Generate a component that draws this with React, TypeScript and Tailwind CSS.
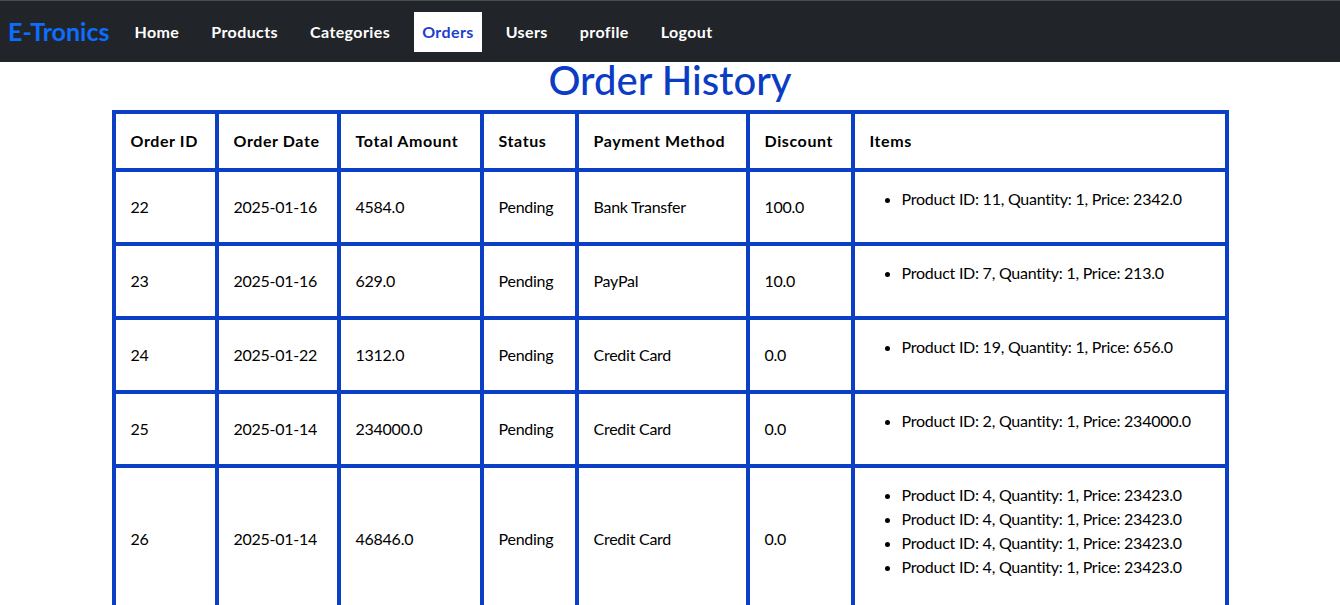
const orders = [
  { id: 22, date: "2025-01-16", total: "4584.0", status: "Pending", method: "Bank Transfer", discount: "100.0", items: ["Product ID: 11, Quantity: 1, Price: 2342.0"] },
  { id: 23, date: "2025-01-16", total: "629.0", status: "Pending", method: "PayPal", discount: "10.0", items: ["Product ID: 7, Quantity: 1, Price: 213.0"] },
  { id: 24, date: "2025-01-22", total: "1312.0", status: "Pending", method: "Credit Card", discount: "0.0", items: ["Product ID: 19, Quantity: 1, Price: 656.0"] },
  { id: 25, date: "2025-01-14", total: "234000.0", status: "Pending", method: "Credit Card", discount: "0.0", items: ["Product ID: 2, Quantity: 1, Price: 234000.0"] },
  {
    id: 26,
    date: "2025-01-14",
    total: "46846.0",
    status: "Pending",
    method: "Credit Card",
    discount: "0.0",
    items: [
      "Product ID: 4, Quantity: 1, Price: 23423.0",
      "Product ID: 4, Quantity: 1, Price: 23423.0",
      "Product ID: 4, Quantity: 1, Price: 23423.0",
      "Product ID: 4, Quantity: 1, Price: 23423.0",
    ],
  },
];

const links = ["Home", "Products", "Categories", "Orders", "Users", "profile", "Logout"];

// column widths measured between border lines
const cols = ["w-[103px]", "w-[122px]", "w-[143px]", "w-[95px]", "w-[171px]", "w-[105px]", "w-[374px]"];
const headers = ["Order ID", "Order Date", "Total Amount", "Status", "Payment Method", "Discount", "Items"];

const cell = "border-4 border-[#0b3fc5] px-[15px] py-[15px] align-middle";

export default function App() {
  return (
    <div className="min-h-screen bg-white text-black font-['Lato','Liberation_Sans',sans-serif] text-base leading-6">
      <nav className="h-[62px] bg-[#212529] border-t border-[#4a4d52] flex items-center px-2">
        <a className="text-[#0d6efd] text-[25px] font-bold mr-[17px] leading-none">E-Tronics</a>
        <ul className="flex items-center gap-4">
          {links.map((l) => (
            <li key={l}>
              <a
                className={
                  l === "Orders"
                    ? "block bg-white text-[#1d3fcf] font-bold tracking-[0.4px] px-2 py-2"
                    : "block text-white font-bold tracking-[0.4px] px-2 py-2"
                }
              >
                {l}
              </a>
            </li>
          ))}
        </ul>
      </nav>

      <h1 className="text-center text-[40px] font-medium text-[#0b3cc4] leading-[36px] pb-3">Order History</h1>

      <table className="mx-auto border-collapse table-fixed w-[1113px]">
        <colgroup>
          {cols.map((c, i) => (
            <col key={i} className={c} />
          ))}
        </colgroup>
        <thead>
          <tr>
            {headers.map((h) => (
              <th key={h} className={`${cell} text-left font-bold tracking-[0.6px]`}>
                {h}
              </th>
            ))}
          </tr>
        </thead>
        <tbody className="tracking-[-0.25px]">
          {orders.map((o) => (
            <tr key={o.id}>
              <td className={cell}>{o.id}</td>
              <td className={cell}>{o.date}</td>
              <td className={cell}>{o.total}</td>
              <td className={cell}>{o.status}</td>
              <td className={cell}>{o.method}</td>
              <td className={cell}>{o.discount}</td>
              <td className={`${cell} !align-top`}>
                <ul className="list-disc pl-8 mb-4">
                  {o.items.map((it, i) => (
                    <li key={i}>{it}</li>
                  ))}
                </ul>
              </td>
            </tr>
          ))}
        </tbody>
      </table>
    </div>
  );
}
